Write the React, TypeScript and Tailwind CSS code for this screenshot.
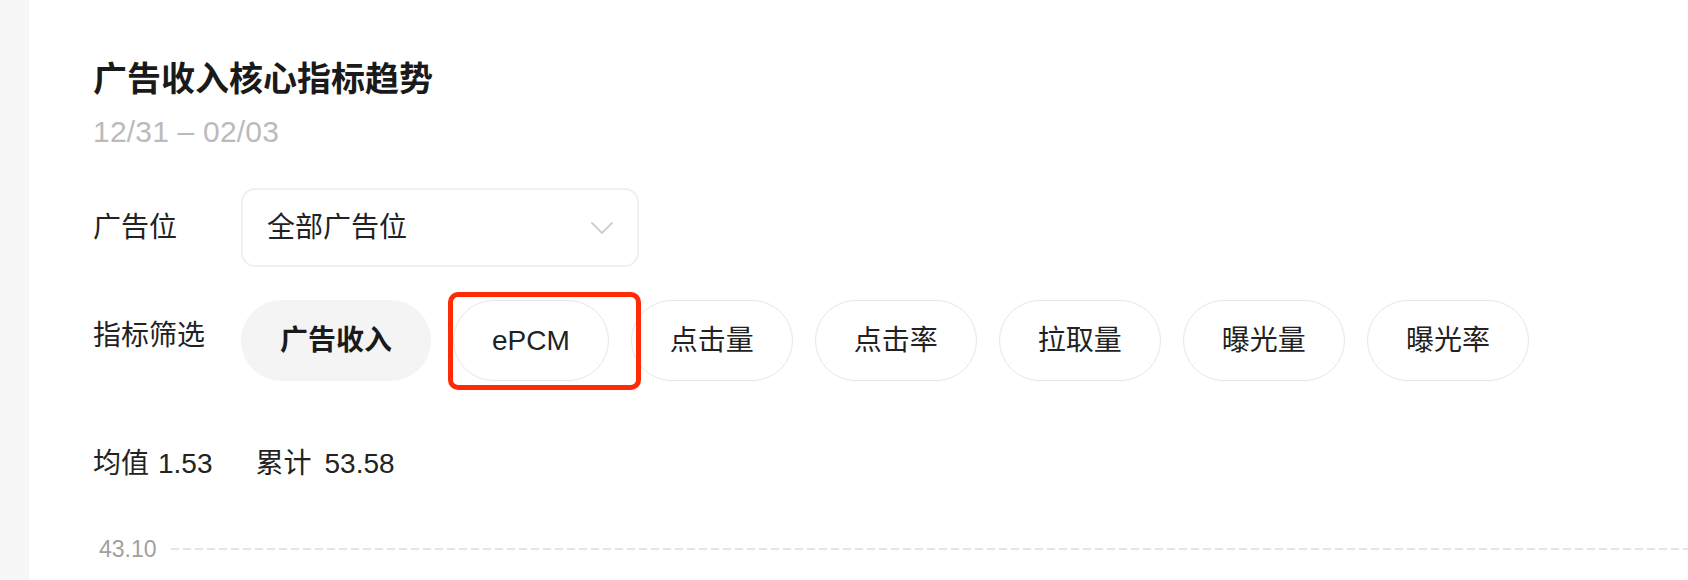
import { useState } from 'react'

const metrics = ['广告收入', 'ePCM', '点击量', '点击率', '拉取量', '曝光量', '曝光率']

const font = { fontFamily: '"Liberation Sans", "Noto Sans CJK SC", sans-serif' }

const Chevron = () => (
  <svg width="22" height="12" viewBox="0 0 22 12" fill="none">
    <path d="M1 1l10 10L21 1" stroke="#cfcfcf" strokeWidth="1.8" strokeLinecap="round" strokeLinejoin="round" />
  </svg>
)

const MetricChip = ({ label, active, marked, onClick }: { label: string; active: boolean; marked: boolean; onClick: () => void }) => (
  <div className="relative">
    <button
      onClick={onClick}
      className={`h-[81px] rounded-full border px-[38px] text-[28px] leading-[40px] whitespace-nowrap ${
        active ? 'border-transparent bg-[#f4f4f4] font-bold text-[#1a1a1a]' : 'border-[#e6e6e6] bg-white text-[#222]'
      }`}
    >
      {label}
    </button>
    {/* 标注框 */}
    {marked && (
      <div className="pointer-events-none absolute -left-[5px] -top-[8px] z-10 h-[98px] w-[193px] rounded-[10px] border-[5px] border-[#ff2a06]"></div>
    )}
  </div>
)

const App = () => {
  const [selected, setSelected] = useState(0)

  return (
    <div className="flex h-[580px] w-full overflow-hidden bg-white" style={font}>
      <div className="w-[29px] shrink-0 bg-[#f7f7f7]"></div>
      <div className="flex min-w-0 flex-1 flex-col pl-[64px] pt-[55px]">
        <h1 className="text-[34px] font-bold leading-[48px] text-[#1a1a1a]">广告收入核心指标趋势</h1>
        <p className="mt-[9px] text-[30px] leading-[40px] tracking-[0.2px] text-[#bbbbbb]">12/31 – 02/03</p>

        <div className="mt-[36px] flex items-center">
          <span className="w-[148px] shrink-0 text-[28px] leading-[40px] text-[#222]">广告位</span>
          <div className="flex h-[79px] w-[398px] items-center justify-between rounded-[14px] border-2 border-[#f0f0f0] pl-[24px] pr-[24px]">
            <span className="text-[28px] leading-[40px] text-[#222]">全部广告位</span>
            <Chevron />
          </div>
        </div>

        <div className="mt-[33px] flex items-start">
          <span className="w-[148px] shrink-0 pt-[16px] text-[28px] leading-[40px] text-[#222]">指标筛选</span>
          <div className="flex gap-[22px]">
            {metrics.map((m, i) => (
              <MetricChip key={m} label={m} active={selected === i} marked={m === 'ePCM'} onClick={() => setSelected(i)} />
            ))}
          </div>
        </div>

        <div className="mt-[63px] flex text-[28px] leading-[40px] text-[#222]">
          <span>
            均值<span className="ml-[9px]">1.53</span>
          </span>
          <span className="ml-[43px]">
            累计<span className="ml-[13px]">53.58</span>
          </span>
        </div>

        <div className="mt-[50px] flex items-center">
          <span className="pl-[6px] text-[23px] leading-[30px] text-[#a0a0a0]">43.10</span>
          <svg className="ml-[14px] flex-1" height="2">
            <line x1="0" y1="1" x2="100%" y2="1" stroke="#e1e3ef" strokeWidth="2" strokeDasharray="8 4" />
          </svg>
        </div>
      </div>
    </div>
  )
}

export default App
